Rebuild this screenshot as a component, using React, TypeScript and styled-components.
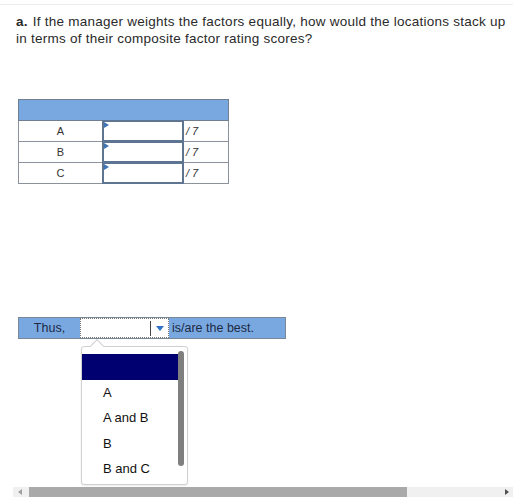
import React from "react";
import styled, { createGlobalStyle } from "styled-components";

const Global = createGlobalStyle`
  html, body { margin: 0; padding: 0; background: #fff; }
  body { font-family: "Liberation Sans", Arial, sans-serif; overflow: hidden; }
  #root { height: 497px; }
`;

const Page = styled.div`
  position: relative;
  height: 497px;
  display: flex;
  flex-direction: column;
`;

const TopRule = styled.div`
  height: 4px;
  border-bottom: 1px solid #ececec;
`;

const Question = styled.p`
  margin: 8px 0 0 16px;
  font-size: 13.5px;
  line-height: 17px;
  color: #2a2a2a;
  letter-spacing: 0.25px;
  white-space: nowrap;
`;

const Lead = styled.b`
  font-weight: 700;
  margin-right: 1px;
`;

const Table = styled.table`
  margin: 52px 0 0 18px;
  border-collapse: collapse;
  width: 211px;
  font-size: 11px;
  color: #333;
`;

const HeadCell = styled.td`
  background: #79a8e1;
  height: 20px;
  border: 1px solid #6f7f8f;
  padding: 0;
`;

const Cell = styled.td<{ $w: number; $align?: string }>`
  width: ${(p) => p.$w}px;
  height: 20px;
  border: 1px solid #8a939c;
  padding: 0;
  text-align: ${(p) => p.$align || "center"};
  position: relative;
`;

const InputBox = styled.div`
  position: absolute;
  inset: -1px -1px -1px -1px;
  border: 2px solid #5d7592;
  background: #fff;
  &::before {
    content: "";
    position: absolute;
    left: 0;
    top: 0;
    border-left: 5px solid #3f74b5;
    border-top: 3px solid transparent;
    border-bottom: 3px solid transparent;
  }
`;

const Slash = styled.span`
  padding-left: 2px;
  font-style: italic;
`;

const ThusBar = styled.div`
  margin: 133px 0 0 18px;
  width: 266px;
  height: 20px;
  background: #79a8e1;
  border: 1px solid #7a8896;
  display: flex;
  align-items: center;
  font-size: 12.5px;
  color: #1c2a44;
  position: relative;
`;

const ThusLabel = styled.span`
  width: 61px;
  text-align: center;
`;

const Select = styled.div`
  position: relative;
  width: 87px;
  height: 18px;
  background: #fff;
  border: 1px dotted #777;
  display: flex;
  justify-content: flex-end;
  align-items: center;
`;

const Sep = styled.div`
  width: 1px;
  height: 15px;
  background: #444;
  margin-right: 5px;
`;

const Arrow = styled.div`
  width: 0;
  height: 0;
  border-left: 4px solid transparent;
  border-right: 4px solid transparent;
  border-top: 5px solid #2f73c2;
  margin-right: 4px;
`;

const After = styled.span`
  margin-left: 3px;
`;

const Menu = styled.div`
  position: absolute;
  left: 62px;
  top: 28px;
  width: 105px;
  height: 137px;
  background: #fff;
  border: 1px solid #d0d0d0;
  border-radius: 3px;
  box-shadow: 0 1px 2px rgba(0, 0, 0, 0.08);
  z-index: 5;
  &::before {
    content: "";
    position: absolute;
    left: 10px;
    top: -6px;
    width: 9px;
    height: 9px;
    background: #fff;
    border-left: 1px solid #d0d0d0;
    border-top: 1px solid #d0d0d0;
    transform: rotate(45deg);
  }
`;

const MenuList = styled.div`
  position: absolute;
  left: 0;
  top: 7px;
  width: 96px;
`;

const Item = styled.div<{ $sel?: boolean }>`
  height: 25.5px;
  line-height: 25.5px;
  padding-left: 21px;
  font-size: 13px;
  color: #111;
  background: ${(p) => (p.$sel ? "#000070" : "transparent")};
`;

const MenuScroll = styled.div`
  position: absolute;
  right: 3px;
  top: 4px;
  width: 6px;
  height: 115px;
  border-radius: 3px;
  background: #7f7f7f;
`;

const HScroll = styled.div`
  margin-top: auto;
  margin-left: 13px;
  height: 10px;
  background: #f0f0f0;
  position: relative;
`;

const HThumb = styled.div`
  position: absolute;
  left: 16px;
  top: 0;
  width: 378px;
  height: 10px;
  background: #a9a9a9;
`;

const LeftArrow = styled.div`
  position: absolute;
  left: 5px;
  top: 2px;
  border-right: 4px solid #a0a0a0;
  border-top: 3px solid transparent;
  border-bottom: 3px solid transparent;
`;

const RightArrow = styled.div`
  position: absolute;
  right: 4px;
  top: 2px;
  border-left: 4px solid #505050;
  border-top: 3px solid transparent;
  border-bottom: 3px solid transparent;
`;

const rows = ["A", "B", "C"];
const options = ["", "A", "A and B", "B", "B and C"];

export default function App() {
  return (
    <Page>
      <Global />
      <TopRule />
      <Question>
        <Lead>a.</Lead> If the manager weights the factors equally, how would the locations stack up
        <br />
        in terms of their composite factor rating scores?
      </Question>
      <Table>
        <tbody>
          <tr>
            <HeadCell colSpan={3} />
          </tr>
          {rows.map((r) => (
            <tr key={r}>
              <Cell $w={83}>{r}</Cell>
              <Cell $w={80}>
                <InputBox />
              </Cell>
              <Cell $w={44} $align="left">
                <Slash>/ 7</Slash>
              </Cell>
            </tr>
          ))}
        </tbody>
      </Table>
      <ThusBar>
        <ThusLabel>Thus,</ThusLabel>
        <Select>
          <Sep />
          <Arrow />
        </Select>
        <After>is/are the best.</After>
        <Menu>
          <MenuList>
            {options.map((o, i) => (
              <Item key={i} $sel={i === 0}>
                {o}
              </Item>
            ))}
          </MenuList>
          <MenuScroll />
        </Menu>
      </ThusBar>
      <HScroll>
        <LeftArrow />
        <HThumb />
        <RightArrow />
      </HScroll>
    </Page>
  );
}
